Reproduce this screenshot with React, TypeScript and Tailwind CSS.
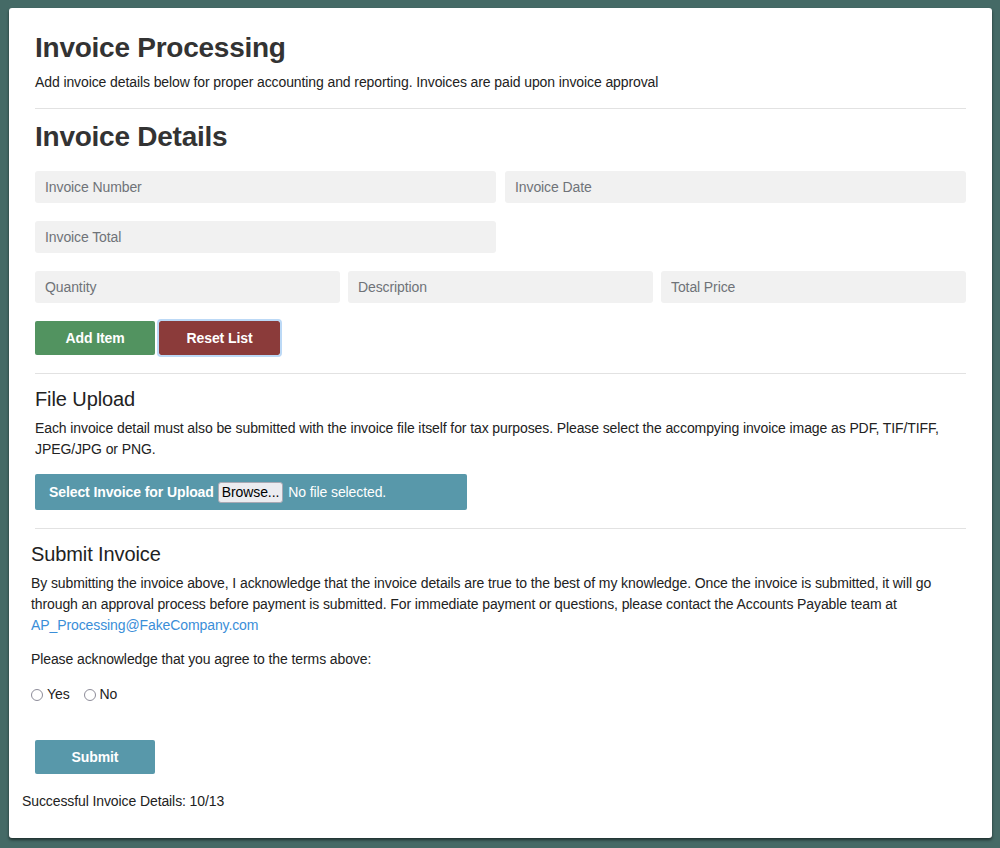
import React from "react";

const font = { fontFamily: '"Liberation Sans", Arial, Helvetica, sans-serif' };

function Field({ placeholder }: { placeholder: string }) {
  return (
    <input
      type="text"
      placeholder={placeholder}
      className="h-[32px] w-full rounded-[3px] bg-[#f1f1f1] px-[10px] text-[14px] tracking-[-0.1px] text-[#333] placeholder:text-[#6f7378] outline-none"
      style={font}
    />
  );
}

function Radio({ label }: { label: string }) {
  return (
    <label className="flex items-center gap-[4px] text-[14px] leading-[21px] text-[#222]">
      <span className="inline-block h-[12px] w-[12px] rounded-full border-[1.5px] border-[#8d8c99] bg-white" />
      <span>{label}</span>
    </label>
  );
}

export default function App() {
  return (
    <div className="min-h-[848px] bg-[#456a66] pl-[9px] pr-[8px] pt-[8px] pb-[10px] tracking-[-0.1px]" style={font}>
      <div className="h-[830px] rounded-[3px] bg-white px-[26px] pt-[23px] shadow-[0_2px_3px_rgba(0,0,0,0.55)]">
        <h1 className="text-[28px] font-bold leading-[34px] tracking-[-0.25px] text-[#333]">Invoice Processing</h1>
        <p className="mt-[7px] text-[14px] leading-[20px] text-[#222]">
          Add invoice details below for proper accounting and reporting. Invoices are paid upon invoice approval
        </p>
        <div className="mt-[16px] h-px bg-[#e2e2e2]" />
        <h2 className="mt-[11px] text-[28px] font-bold leading-[34px] tracking-[-0.25px] text-[#333]">Invoice Details</h2>

        <div className="mt-[17px] grid grid-cols-2 gap-[9px]">
          <Field placeholder="Invoice Number" />
          <Field placeholder="Invoice Date" />
        </div>
        <div className="mt-[18px] grid grid-cols-2 gap-[9px]">
          <Field placeholder="Invoice Total" />
        </div>
        <div className="mt-[18px] grid grid-cols-3 gap-[8px]">
          <Field placeholder="Quantity" />
          <Field placeholder="Description" />
          <Field placeholder="Total Price" />
        </div>

        <div className="mt-[18px] flex gap-[4px]">
          <button className="h-[34px] w-[120px] rounded-[2px] bg-[#529360] text-[14px] font-bold text-white">
            Add Item
          </button>
          <button className="h-[34px] w-[121px] rounded-[2px] bg-[#8b3b3a] text-[14px] font-bold text-white outline outline-[2px] outline-[#bcd9f6]">
            Reset List
          </button>
        </div>

        <div className="mt-[18px] h-px bg-[#e2e2e2]" />
        <h3 className="mt-[13px] text-[20px] leading-[24px] text-[#222]">File Upload</h3>
        <p className="mt-[7px] text-[14px] leading-[21px] text-[#222]">
          Each invoice detail must also be submitted with the invoice file itself for tax purposes. Please select the accompying invoice image as PDF, TIF/TIFF, JPEG/JPG or PNG.
        </p>
        <div className="mt-[14px] flex h-[36px] w-[432px] items-center rounded-[2px] bg-[#5898aa] pl-[14px] text-[14px] text-white">
          <span className="font-bold">Select Invoice for Upload</span>
          <span className="ml-[4px] flex h-[21px] items-center rounded-[3px] border border-[#a9a9b4] bg-[#ececf0] px-[3px] text-black">
            Browse...
          </span>
          <span className="ml-[5px]">No file selected.</span>
        </div>

        <div className="mt-[18px] h-px bg-[#e2e2e2]" />
        <div className="-ml-[4px]">
          <h3 className="mt-[13px] text-[20px] leading-[24px] text-[#222]">Submit Invoice</h3>
          <p className="mt-[7px] text-[14px] leading-[21px] text-[#222]">
            By submitting the invoice above, I acknowledge that the invoice details are true to the best of my knowledge. Once the invoice is submitted, it will go through an approval process before payment is submitted. For immediate payment or questions, please contact the Accounts Payable team at{" "}
            <a href="#" className="text-[#3a8ed8]">AP_Processing@FakeCompany.com</a>
          </p>
          <p className="mt-[13px] text-[14px] leading-[21px] text-[#222]">
            Please acknowledge that you agree to the terms above:
          </p>
          <div className="mt-[14px] flex gap-[14px]">
            <Radio label="Yes" />
            <Radio label="No" />
          </div>
        </div>
        <button className="mt-[35px] h-[34px] w-[120px] rounded-[2px] bg-[#5898aa] text-[14px] font-bold text-white">
          Submit
        </button>
        <p className="-ml-[13px] mt-[17px] text-[14px] leading-[21px] text-[#222]">
          Successful Invoice Details: 10/13
        </p>
      </div>
    </div>
  );
}
